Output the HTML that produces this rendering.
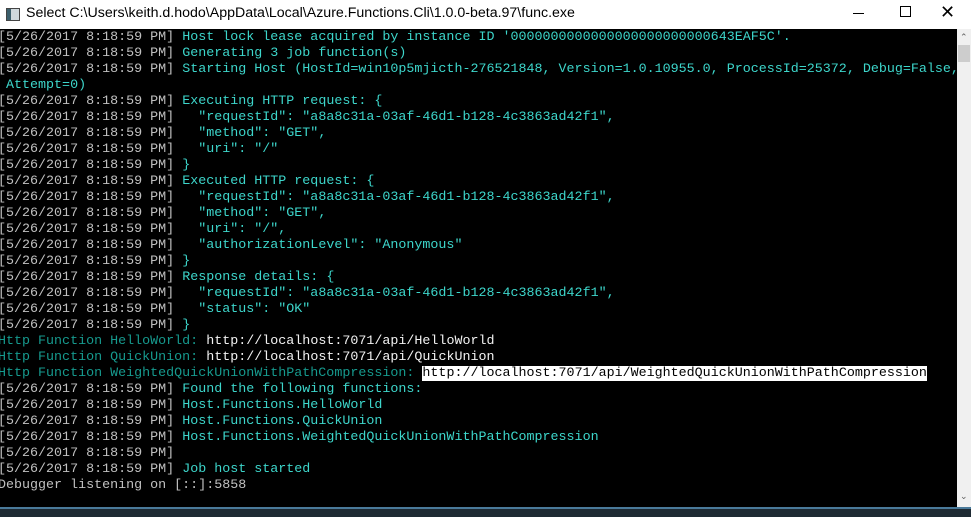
<!DOCTYPE html>
<html><head><meta charset="utf-8"><style>
body{margin:0;width:971px;height:515px;overflow:hidden;background:#000;position:relative;font-family:"Liberation Sans",sans-serif}
.tb{position:absolute;left:0;top:0;width:971px;height:29px;background:#fff}
.tb .t{position:absolute;left:26px;top:5px;font-size:14.2px;color:#000}
.ic{position:absolute;left:6px;top:8px;width:12px;height:11px;border:1px solid #444;background:#cfd8dc}
.ic:after{content:"";position:absolute;left:0;top:0;width:4px;height:11px;background:#3b5e6b}
.con{position:absolute;left:-2px;top:30px;font-family:"Liberation Mono",monospace;font-size:13.35px;line-height:16px;white-space:pre;color:#c0c0c0}
.c{color:#3dd6cb}.d{color:#169a8e}.w{color:#f2f2f2}.h{background:#fff;color:#000}
.sb{position:absolute;left:957px;top:29px;width:14px;height:479px;background:#f0f0f0}
.th{position:absolute;left:958px;top:45px;width:12px;height:17px;background:#cdcdcd}
.bot{position:absolute;left:0;top:507px;width:971px;height:8px;background:#1e2a33;border-top:2px solid #4a7a9a}
</style></head><body>
<div class="tb"><div class="ic"></div><div class="t">Select C:\Users\keith.d.hodo\AppData\Local\Azure.Functions.Cli\1.0.0-beta.97\func.exe</div>
<div style="position:absolute;left:853px;top:13px;width:11px;height:1px;background:#000"></div>
<div style="position:absolute;left:900px;top:6px;width:9px;height:9px;border:1px solid #000"></div>
<div style="position:absolute;left:940px;top:2px;font-size:18px;color:#000">✕</div></div>
<div class="con">[5/26/2017 8:18:59 PM] <span class="c">Host lock lease acquired by instance ID '0000000000000000000000000643EAF5C'.</span>
[5/26/2017 8:18:59 PM] <span class="c">Generating 3 job function(s)</span>
[5/26/2017 8:18:59 PM] <span class="c">Starting Host (HostId=win10p5mjicth-276521848, Version=1.0.10955.0, ProcessId=25372, Debug=False,</span>
<span class="c"> Attempt=0)</span>
[5/26/2017 8:18:59 PM] <span class="c">Executing HTTP request: {</span>
[5/26/2017 8:18:59 PM] <span class="c">  "requestId": "a8a8c31a-03af-46d1-b128-4c3863ad42f1",</span>
[5/26/2017 8:18:59 PM] <span class="c">  "method": "GET",</span>
[5/26/2017 8:18:59 PM] <span class="c">  "uri": "/"</span>
[5/26/2017 8:18:59 PM] <span class="c">}</span>
[5/26/2017 8:18:59 PM] <span class="c">Executed HTTP request: {</span>
[5/26/2017 8:18:59 PM] <span class="c">  "requestId": "a8a8c31a-03af-46d1-b128-4c3863ad42f1",</span>
[5/26/2017 8:18:59 PM] <span class="c">  "method": "GET",</span>
[5/26/2017 8:18:59 PM] <span class="c">  "uri": "/",</span>
[5/26/2017 8:18:59 PM] <span class="c">  "authorizationLevel": "Anonymous"</span>
[5/26/2017 8:18:59 PM] <span class="c">}</span>
[5/26/2017 8:18:59 PM] <span class="c">Response details: {</span>
[5/26/2017 8:18:59 PM] <span class="c">  "requestId": "a8a8c31a-03af-46d1-b128-4c3863ad42f1",</span>
[5/26/2017 8:18:59 PM] <span class="c">  "status": "OK"</span>
[5/26/2017 8:18:59 PM] <span class="c">}</span>
<span class="d">Http Function HelloWorld:</span> <span class="w">http://localhost:7071/api/HelloWorld</span>
<span class="d">Http Function QuickUnion:</span> <span class="w">http://localhost:7071/api/QuickUnion</span>
<span class="d">Http Function WeightedQuickUnionWithPathCompression:</span> <span class="h">http://localhost:7071/api/WeightedQuickUnionWithPathCompression</span>
[5/26/2017 8:18:59 PM] <span class="c">Found the following functions:</span>
[5/26/2017 8:18:59 PM] <span class="c">Host.Functions.HelloWorld</span>
[5/26/2017 8:18:59 PM] <span class="c">Host.Functions.QuickUnion</span>
[5/26/2017 8:18:59 PM] <span class="c">Host.Functions.WeightedQuickUnionWithPathCompression</span>
[5/26/2017 8:18:59 PM]
[5/26/2017 8:18:59 PM] <span class="c">Job host started</span>
Debugger listening on [::]:5858</div>
<div class="sb"><div style="position:absolute;left:3px;top:3px;font-size:9px;color:#606060">⌃</div><div style="position:absolute;left:3px;top:462px;font-size:9px;color:#606060">⌄</div></div>
<div class="th"></div>
<div class="bot"></div>
</body></html>
